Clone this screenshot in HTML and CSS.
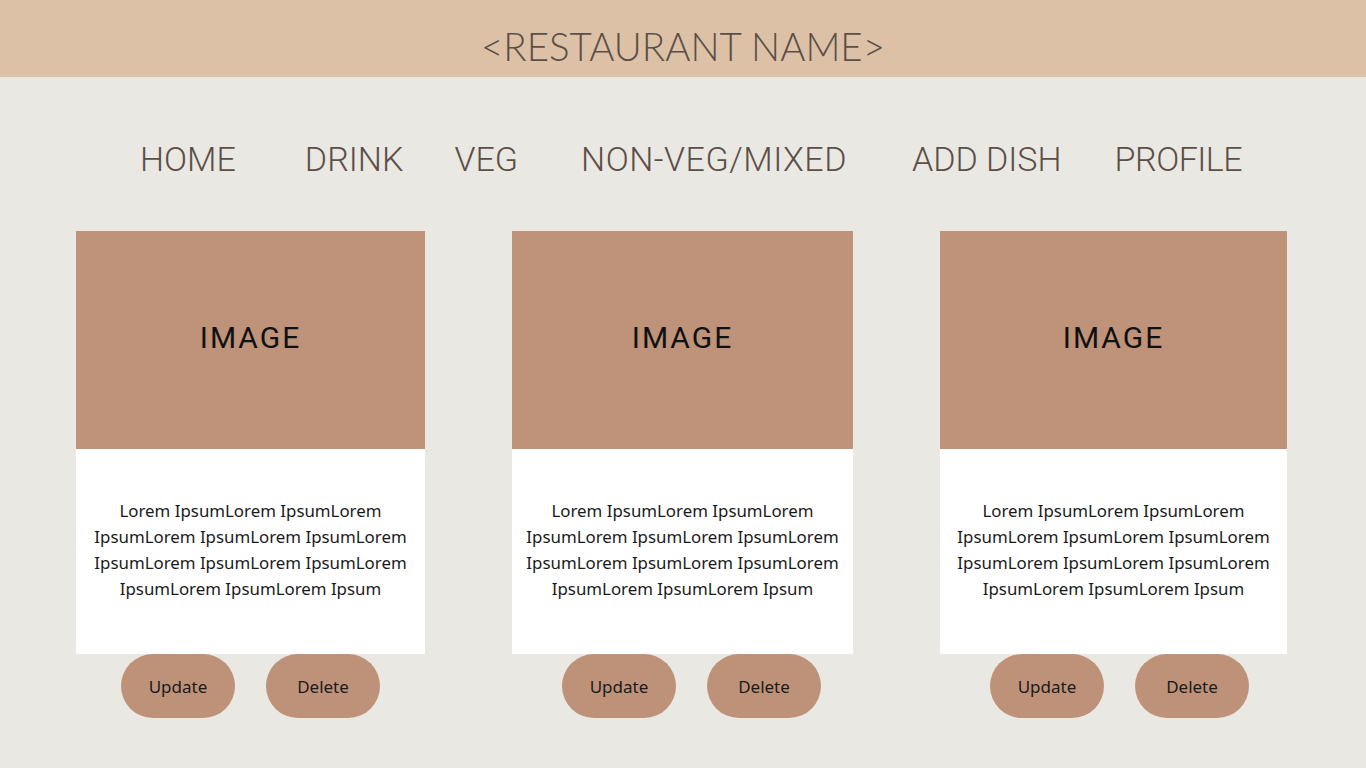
FILE: index.html
```html
<!DOCTYPE html>
<html lang="en">
<head>
<meta charset="utf-8">
<title>Restaurant</title>
<link rel="stylesheet" href="styles.css">
</head>
<body>
<header class="topbar">
  <h1 class="title">&lt;RESTAURANT NAME&gt;</h1>
</header>
<nav class="nav">
  <a class="nav-link">HOME</a>
  <a class="nav-link nav-drink">DRINK</a>
  <a class="nav-link nav-veg">VEG</a>
  <a class="nav-link nav-nonveg">NON-VEG/MIXED</a>
  <a class="nav-link nav-add">ADD DISH</a>
  <a class="nav-link nav-profile">PROFILE</a>
</nav>
<main class="cards">
  <section class="card">
    <div class="card-image">IMAGE</div>
    <div class="card-body"><p class="card-text">Lorem IpsumLorem IpsumLorem<br>IpsumLorem IpsumLorem IpsumLorem<br>IpsumLorem IpsumLorem IpsumLorem<br>IpsumLorem IpsumLorem Ipsum</p></div>
    <div class="actions"><button class="btn">Update</button><button class="btn">Delete</button></div>
  </section>
  <section class="card">
    <div class="card-image">IMAGE</div>
    <div class="card-body"><p class="card-text">Lorem IpsumLorem IpsumLorem<br>IpsumLorem IpsumLorem IpsumLorem<br>IpsumLorem IpsumLorem IpsumLorem<br>IpsumLorem IpsumLorem Ipsum</p></div>
    <div class="actions actions-mid"><button class="btn">Update</button><button class="btn">Delete</button></div>
  </section>
  <section class="card">
    <div class="card-image">IMAGE</div>
    <div class="card-body"><p class="card-text">Lorem IpsumLorem IpsumLorem<br>IpsumLorem IpsumLorem IpsumLorem<br>IpsumLorem IpsumLorem IpsumLorem<br>IpsumLorem IpsumLorem Ipsum</p></div>
    <div class="actions actions-right"><button class="btn">Update</button><button class="btn">Delete</button></div>
  </section>
</main>
</body>
</html>
```
FILE: styles.css
```css
html, body {
  margin: 0;
  padding: 0;
}
body {
  background: #eae8e3;
  width: 1366px;
  height: 768px;
  overflow: hidden;
  font-family: "Noto Sans", sans-serif;
}
.topbar {
  height: 77px;
  background: #ddc1a7;
  display: flex;
  align-items: center;
  justify-content: center;
}
.title {
  margin: 0;
  padding-top: 14px;
  font-family: Lato, sans-serif;
  font-weight: 300;
  font-size: 38.5px;
  line-height: 40px;
  color: #5c4f47;
}
.nav {
  height: 154px;
  padding-left: 140px;
  display: flex;
  align-items: center;
  box-sizing: border-box;
}
.nav-link {
  font-family: Roboto, sans-serif;
  font-weight: 300;
  font-size: 34px;
  line-height: 34px;
  color: #5c4f47;
  padding-top: 10px;
  white-space: nowrap;
}
.nav-drink { margin-left: 69px; }
.nav-veg { margin-left: 51px; }
.nav-nonveg { margin-left: 63px; letter-spacing: 0.5px; }
.nav-add { margin-left: 65px; }
.nav-profile { margin-left: 53px; letter-spacing: -0.5px; }
.cards {
  display: grid;
  grid-template-columns: 349px 341px 347px;
  column-gap: 87px;
  padding-left: 76px;
}
.card {
  display: flex;
  flex-direction: column;
}
.card-image {
  height: 218px;
  box-sizing: border-box;
  padding-bottom: 6px;
  background: #be9379;
  display: flex;
  align-items: center;
  justify-content: center;
  font-family: Roboto, sans-serif;
  font-size: 30px;
  letter-spacing: 2px;
  color: #111;
}
.card-body {
  height: 205px;
  box-sizing: border-box;
  padding-bottom: 4px;
  background: #ffffff;
  display: flex;
  align-items: center;
  justify-content: center;
}
.card-text {
  margin: 0;
  text-align: center;
  font-size: 16.85px;
  line-height: 26px;
  color: #1a1a1a;
  white-space: nowrap;
}
.actions {
  display: flex;
  justify-content: center;
  gap: 31px;
}
.actions-mid { padding-left: 18px; }
.actions-right { padding-left: 12px; }
.btn {
  width: 114px;
  height: 64px;
  border: none;
  border-radius: 32px;
  background: #be9279;
  font-family: "Noto Sans", sans-serif;
  font-size: 17px;
  color: #1a1a1a;
  padding: 0;
}
```
